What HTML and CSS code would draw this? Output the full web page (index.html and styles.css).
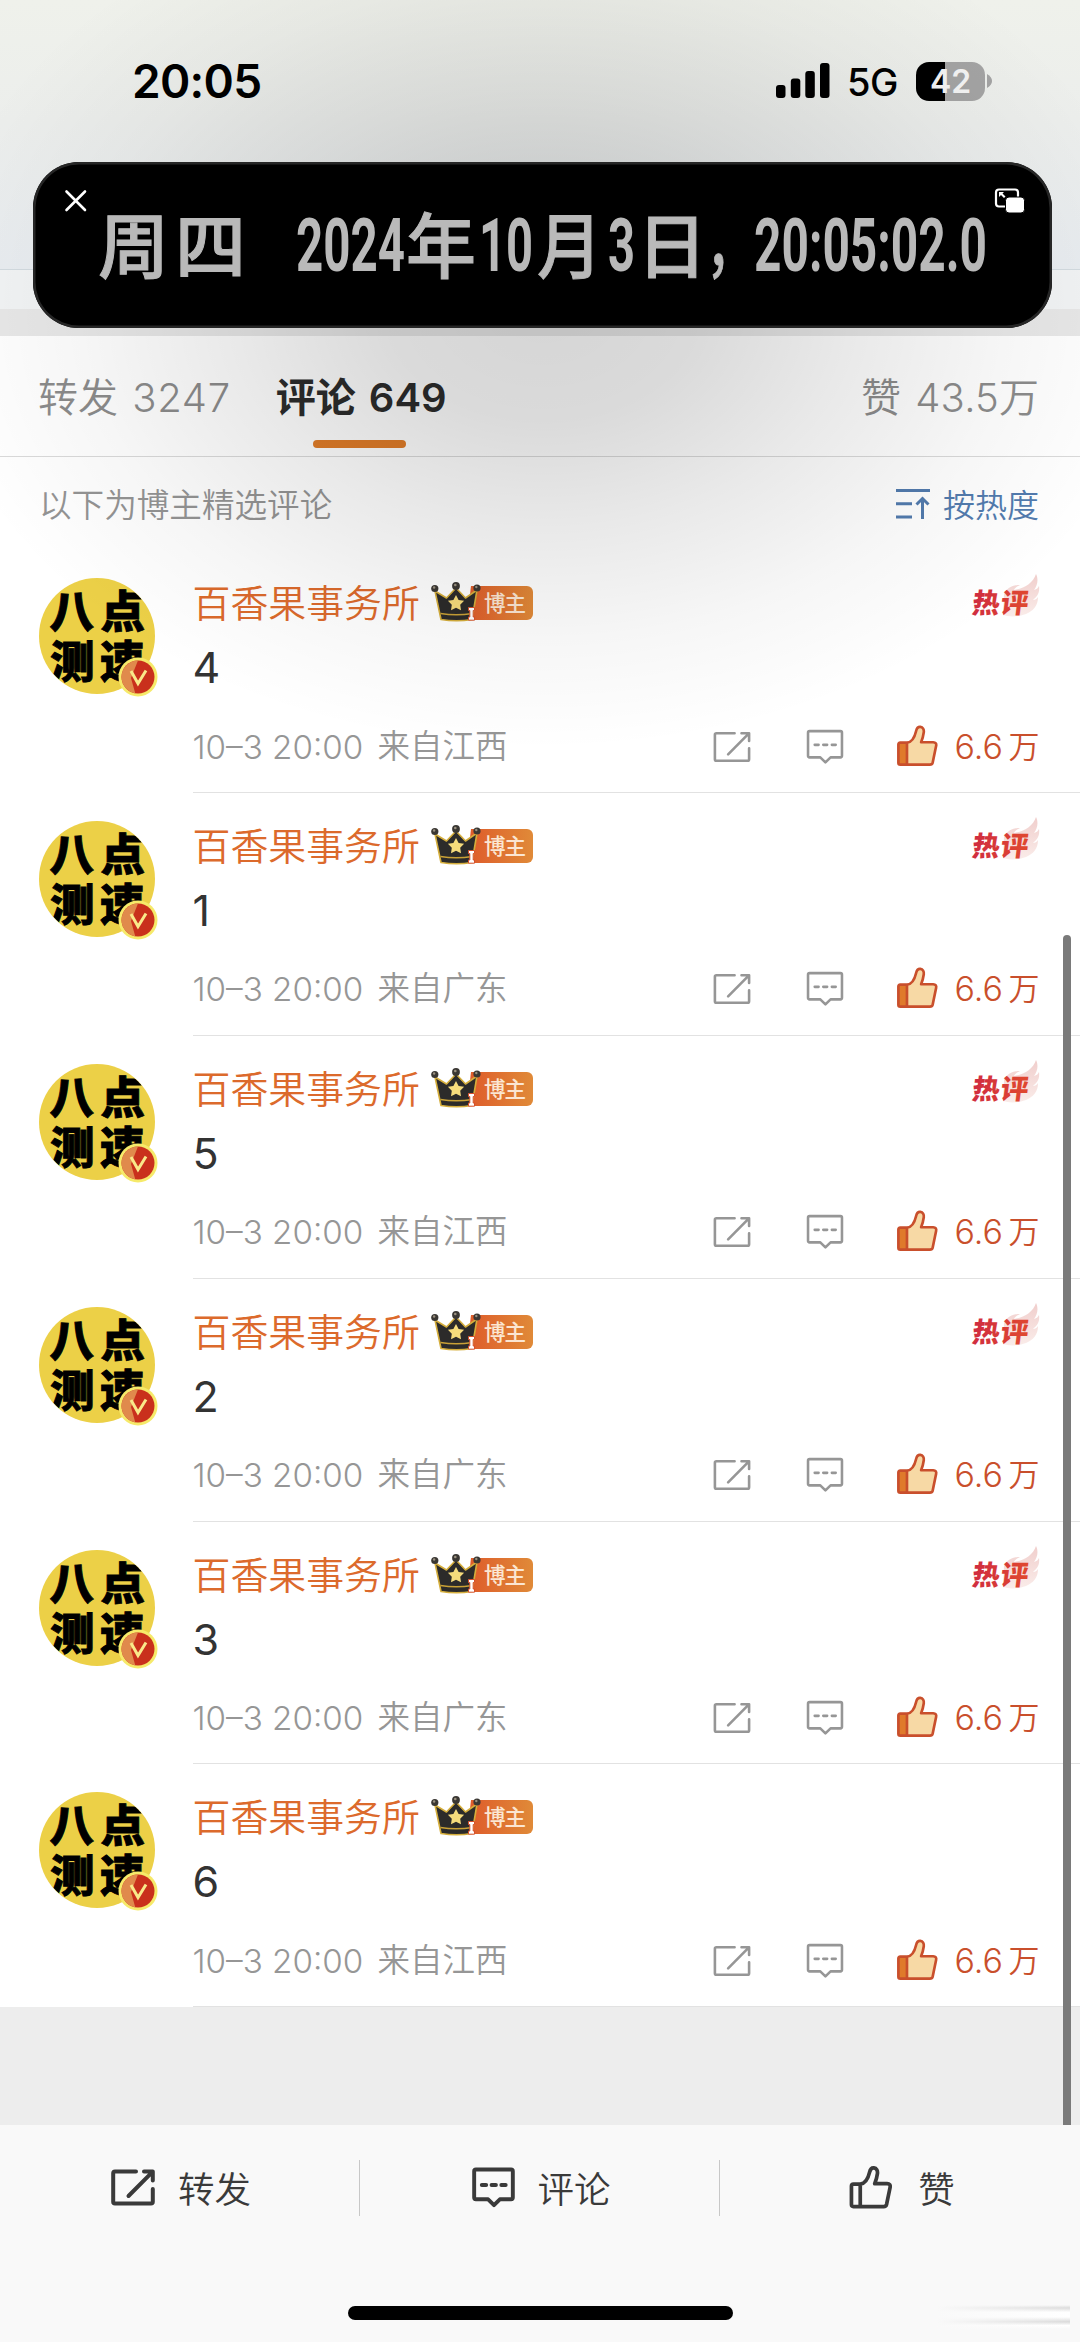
FILE: index.html
```html
<!DOCTYPE html>
<html lang="zh-CN">
<head>
<meta charset="utf-8">
<title>评论</title>
<link rel="stylesheet" href="styles.css">
</head>
<body>
<svg class="defs" width="0" height="0" aria-hidden="true">
  <defs>
    <linearGradient id="tagFill" x1="0" x2="1"><stop offset="0" stop-color="#de5a2a"/><stop offset="1" stop-color="#e08a38"/></linearGradient>
    <linearGradient id="hotFill" x1="0" x2="1"><stop offset="0" stop-color="#d02c40"/><stop offset="1" stop-color="#e0492f"/></linearGradient>
    <linearGradient id="flameFill" x1="0" x2="0" y1="0" y2="1"><stop offset="0" stop-color="#eab9b6"/><stop offset="1" stop-color="#f8e4e0"/></linearGradient>
    <clipPath id="round"><circle cx="58" cy="58" r="57.7"/></clipPath>
    <clipPath id="vclip"><circle cx="99" cy="99" r="16.500"/></clipPath>
  </defs>
  <symbol id="share" viewBox="0 0 44 37">
    <path d="M25 2.500H4a1.800 1.800 0 0 0-1.800 1.800v28.400a1.800 1.800 0 0 0 1.800 1.800h36a1.800 1.800 0 0 0 1.800-1.800V20M33 2.500h8.800v9M41 3.300L17.500 27" fill="none" stroke="currentColor" stroke-linecap="round" stroke-linejoin="round"/>
  </symbol>
  <symbol id="comment" viewBox="0 0 44 42">
    <path d="M4 2.500h36a1.800 1.800 0 0 1 1.800 1.800v27a1.800 1.800 0 0 1-1.800 1.800H28.500L22.500 39l-6-5.900H4a1.800 1.800 0 0 1-1.800-1.800v-27A1.800 1.800 0 0 1 4 2.500zM10 18.500h4.500M20 18.500h4.500M30 18.500h4.500" fill="none" stroke="currentColor" stroke-linecap="round" stroke-linejoin="round"/>
  </symbol>
  <symbol id="thumb" viewBox="0 0 44 44">
    <path class="thumb-fill" d="M12 18.500c5-.5 7.500-5.500 9-12 .8-3.500 2.500-4.700 4.500-4.500 2.600.3 4 2.700 3.600 5.600-.6 4.300-1.500 7.500-2.800 10.500H39c2.500 0 3.600 1.500 3 4l-3.600 17c-.4 1.700-1.200 2.400-3 2.400H12z"/>
    <path class="thumb-cuff" d="M11 18.500H4.500c-1.400 0-2 .7-2 2v19c0 1.400.6 2 2 2H11z"/>
    <path d="M11.500 18.500H4.500c-1.400 0-2 .7-2 2v19c0 1.400.6 2 2 2h31c1.800 0 2.600-.7 3-2.400l3.500-17c.6-2.500-.5-4-3-4H26.300c1.300-3 2.200-6.200 2.800-10.500.4-2.900-1-5.300-3.600-5.600-2-.2-3.700 1-4.500 4.500-1.500 6.500-4.500 11.500-9.500 12zM11.500 18.500v23" fill="none" stroke="currentColor" stroke-linejoin="round"/>
  </symbol>
  <symbol id="avatar" viewBox="0 0 120 120">
    <circle cx="58" cy="58" r="58" fill="#ecd047"/>
    <g clip-path="url(#round)">
      <g class="avatar-text">
        <text x="10.500" y="49.500">八</text><text x="61.500" y="49.500">点</text>
        <text x="11" y="100">测</text><text x="61" y="100">速</text>
      </g>
    </g>
    <circle cx="99" cy="99" r="19.500" fill="#f6ea6a"/>
    <g clip-path="url(#vclip)">
      <path d="M80 80h40v40H80z" fill="#c9301c"/>
      <path d="M80 80h20l-8 20 5 18H80z" fill="#e08a4c"/>
    </g>
    <path d="M92 93l7 12.500 8-13" fill="none" stroke="#f9e98a" stroke-width="3"/>
  </symbol>
  <symbol id="owner" viewBox="0 0 104 40">
    <path d="M40 4h56a6 6 0 0 1 6 6v22a6 6 0 0 1-6 6H36z" fill="url(#tagFill)"/>
    <text class="owner-text" x="53" y="29" textLength="42">博主</text>
    <path d="M4 9l11.500 7L25 6l9.500 10L46 8l-5 29.500q-15.500 2.500-31 0z" fill="#2c2b2a" stroke="#d5ae3c" stroke-width="1.600" stroke-linejoin="round"/>
    <path d="M9.500 31.500q15.500 2.500 32 0" fill="none" stroke="#c9a136" stroke-width="1.300"/>
    <circle cx="3.800" cy="6.500" r="3.600" fill="#3a3733"/><circle cx="25" cy="4" r="3.900" fill="#3a3733"/><circle cx="46" cy="6" r="3.600" fill="#3a3733"/>
    <circle cx="3.100" cy="5.500" r="1.200" fill="#9a9180"/><circle cx="24.300" cy="3" r="1.300" fill="#9a9180"/><circle cx="45.300" cy="5" r="1.200" fill="#9a9180"/>
    <path d="M25 13l2.600 4.900 5.500.9-3.900 4 .8 5.500-5-2.500-5 2.500.8-5.500-3.900-4 5.500-.9z" fill="#f6dc7c"/>
    <path d="M37.500 25.500h6v3h-1.300v6.500h1.300v3.200h-6V35h1.300v-6.500h-1.300z" fill="#fff" stroke="#d4512c" stroke-width="1"/>
  </symbol>
  <symbol id="hot" viewBox="0 0 72 52">
    <path d="M36 23c3-6 9-9 16-9-4 2-5 3-6 5 11-2 19-7 22-16 3 6 1 12-2 16 3-1 4-2 5-4 1 7-2 11-6 14 2 0 4-1 5-3 0 9-5 14-12 17-8 3-17 3-23 1z" fill="url(#flameFill)" opacity=".7"/>
    <text class="hot-text" x="8.500" y="42.500" transform="skewX(-7)" textLength="56">热评</text>
  </symbol>
</svg>

<div class="phone">
  <header class="status">
    <span class="clock">20:05</span>
    <div class="status-right">
      <svg class="signal" viewBox="0 0 54 36"><rect x="0" y="22" width="9.500" height="13" rx="3"/><rect x="14.800" y="15.500" width="9.500" height="19.500" rx="3"/><rect x="29.300" y="8" width="9.500" height="27" rx="3"/><rect x="44" y="0" width="9.500" height="35" rx="3"/></svg>
      <span class="network">5G</span>
      <span class="battery">42</span>
      <svg class="nub" viewBox="0 0 5 14"><path d="M0 0q5 3 5 7t-5 7z"/></svg>
    </div>
  </header>
  <div class="nav-edge"></div>
  <div class="divider-band"></div>

  <nav class="tabs">
    <span class="tab">转发 <i>3247</i></span>
    <span class="tab active">评论 <i>649</i></span>
    <span class="tab likes">赞 <i>43.5</i>万</span>
  </nav>
  <div class="sort">
    <span>以下为博主精选评论</span>
    <span class="sort-by">
      <svg viewBox="0 0 34 32"><path d="M0 2.500h34M0 15.800h16M0 29h16M26.500 31V11.500M20.500 16.500l6-6 6 6" fill="none" stroke="currentColor" stroke-width="3"/></svg>
      按热度
    </span>
  </div>

  <main class="list">
    <article class="row">
      <svg class="avatar"><use href="#avatar"/></svg>
      <div class="body">
        <div class="head"><span class="name">百香果事务所</span><svg class="owner"><use href="#owner"/></svg><svg class="hot"><use href="#hot"/></svg></div>
        <p class="text">4</p>
        <div class="meta"><span class="time">10–3 20:00</span><span class="from">来自江西</span><svg class="i-share"><use href="#share"/></svg><svg class="i-comment"><use href="#comment"/></svg><svg class="i-thumb"><use href="#thumb"/></svg><span class="count">6.6<b>万</b></span></div>
      </div>
    </article>
    <article class="row">
      <svg class="avatar"><use href="#avatar"/></svg>
      <div class="body">
        <div class="head"><span class="name">百香果事务所</span><svg class="owner"><use href="#owner"/></svg><svg class="hot"><use href="#hot"/></svg></div>
        <p class="text">1</p>
        <div class="meta"><span class="time">10–3 20:00</span><span class="from">来自广东</span><svg class="i-share"><use href="#share"/></svg><svg class="i-comment"><use href="#comment"/></svg><svg class="i-thumb"><use href="#thumb"/></svg><span class="count">6.6<b>万</b></span></div>
      </div>
    </article>
    <article class="row">
      <svg class="avatar"><use href="#avatar"/></svg>
      <div class="body">
        <div class="head"><span class="name">百香果事务所</span><svg class="owner"><use href="#owner"/></svg><svg class="hot"><use href="#hot"/></svg></div>
        <p class="text">5</p>
        <div class="meta"><span class="time">10–3 20:00</span><span class="from">来自江西</span><svg class="i-share"><use href="#share"/></svg><svg class="i-comment"><use href="#comment"/></svg><svg class="i-thumb"><use href="#thumb"/></svg><span class="count">6.6<b>万</b></span></div>
      </div>
    </article>
    <article class="row">
      <svg class="avatar"><use href="#avatar"/></svg>
      <div class="body">
        <div class="head"><span class="name">百香果事务所</span><svg class="owner"><use href="#owner"/></svg><svg class="hot"><use href="#hot"/></svg></div>
        <p class="text">2</p>
        <div class="meta"><span class="time">10–3 20:00</span><span class="from">来自广东</span><svg class="i-share"><use href="#share"/></svg><svg class="i-comment"><use href="#comment"/></svg><svg class="i-thumb"><use href="#thumb"/></svg><span class="count">6.6<b>万</b></span></div>
      </div>
    </article>
    <article class="row">
      <svg class="avatar"><use href="#avatar"/></svg>
      <div class="body">
        <div class="head"><span class="name">百香果事务所</span><svg class="owner"><use href="#owner"/></svg><svg class="hot"><use href="#hot"/></svg></div>
        <p class="text">3</p>
        <div class="meta"><span class="time">10–3 20:00</span><span class="from">来自广东</span><svg class="i-share"><use href="#share"/></svg><svg class="i-comment"><use href="#comment"/></svg><svg class="i-thumb"><use href="#thumb"/></svg><span class="count">6.6<b>万</b></span></div>
      </div>
    </article>
    <article class="row">
      <svg class="avatar"><use href="#avatar"/></svg>
      <div class="body">
        <div class="head"><span class="name">百香果事务所</span><svg class="owner"><use href="#owner"/></svg></div>
        <p class="text">6</p>
        <div class="meta"><span class="time">10–3 20:00</span><span class="from">来自江西</span><svg class="i-share"><use href="#share"/></svg><svg class="i-comment"><use href="#comment"/></svg><svg class="i-thumb"><use href="#thumb"/></svg><span class="count">6.6<b>万</b></span></div>
      </div>
    </article>
  </main>
  <div class="list-end"></div>

  <footer class="toolbar">
    <div class="actions">
      <div class="action"><svg class="b-share"><use href="#share"/></svg><span>转发</span></div>
      <div class="action"><svg class="b-comment"><use href="#comment"/></svg><span>评论</span></div>
      <div class="action like"><svg class="b-thumb"><use href="#thumb"/></svg><span>赞</span></div>
    </div>
    <div class="home"></div>
    <div class="smudge"></div>
  </footer>

  <div class="scrollbar"></div>

  <div class="pip-shade"></div>
  <section class="pip">
    <svg viewBox="0 0 1019 166" width="1019" height="166">
      <path d="M33.500 29.500l18.500 18.500M52 29.500L33.500 48" stroke="#fff" stroke-width="2.600" stroke-linecap="round"/>
      <g class="pip-text">
        <text class="cjk" x="65" y="110" textLength="148">周四</text>
        <text class="num" x="263" y="109" textLength="109" lengthAdjust="spacingAndGlyphs">2024</text>
        <text class="cjk" x="373" y="110" textLength="70" lengthAdjust="spacingAndGlyphs">年</text>
        <text class="num" x="446" y="109" textLength="54" lengthAdjust="spacingAndGlyphs">10</text>
        <text class="cjk" x="504" y="110" textLength="65" lengthAdjust="spacingAndGlyphs">月</text>
        <text class="num" x="575" y="109" textLength="27" lengthAdjust="spacingAndGlyphs">3</text>
        <text class="cjk" x="604" y="110" textLength="70" lengthAdjust="spacingAndGlyphs">日</text>
        <text class="cjk" x="673" y="108" textLength="48" lengthAdjust="spacingAndGlyphs">，</text>
        <text class="num" x="721" y="109" textLength="233" lengthAdjust="spacingAndGlyphs">20:05:02.0</text>
      </g>
      <rect x="963" y="27.500" width="22" height="17" rx="3" fill="none" stroke="#fff" stroke-width="2.200"/>
      <path d="M966 30h5l-1.500 1.500 3 3-1.500 1.500-3-3L966 35z" fill="#fff"/>
      <rect x="972.500" y="35" width="19" height="16" rx="3.500" fill="#fff" stroke="#000" stroke-width="1"/>
    </svg>
  </section>
</div>
</body>
</html>
```
FILE: styles.css
```css
* { box-sizing: border-box; }
body { margin: 0; background: #fff; }
p { margin: 0; }
i { font-style: normal; }
svg { display: block; flex: none; overflow: visible; }
.defs { position: absolute; }

.phone {
  position: relative;
  width: 1080px;
  height: 2342px;
  overflow: hidden;
  display: flex;
  flex-direction: column;
  background: #fff;
  font-family: Inter, "Noto Sans CJK SC", sans-serif;
  font-weight: 350;
  color: #333;
  white-space: nowrap;
}

/* status bar */
.status {
  height: 270px;
  padding: 56px 88px 0 132px;
  display: flex;
  justify-content: space-between;
  align-items: flex-start;
  border-bottom: 1px solid #d3dbe0;
  background: linear-gradient(#eff1eb, #eceeec 45%, #e9edf1);
  color: #000;
}
.clock { font-size: 46px; line-height: 50px; font-weight: 600; letter-spacing: -.7px; }
.status-right { display: flex; align-items: center; height: 50px; }
.signal { width: 54px; height: 36px; }
.network { margin-left: 17px; font-size: 38px; font-weight: 500; line-height: 50px; padding-top: 2px; letter-spacing: -.5px; }
.battery {
  width: 69px;
  height: 39px;
  margin-left: 18px;
  border-radius: 13px;
  background: linear-gradient(90deg, #000 42%, #a4a4a4 42%);
  color: #f4f4f4;
  text-align: center;
  font-size: 32px;
  font-weight: 600;
  line-height: 39px;
}
.nub { width: 5px; height: 14px; margin-left: 2px; fill: #a4a4a4; }
.nav-edge { height: 39px; background: #f2f4f5; }
.divider-band { height: 27px; background: #e8e8e8; }

/* tabs */
.tabs {
  height: 121px;
  padding: 4px 41px 0 38px;
  display: flex;
  align-items: center;
  border-bottom: 1px solid #dadada;
  font-size: 40px;
  color: #8c8c8c;
}
.tab { position: relative; line-height: 60px; }
.tab i { margin-left: 3px; letter-spacing: .7px; }
.tab.active { margin-left: 45px; color: #2c2c2c; font-weight: 600; }
.tab.active i { letter-spacing: 0; }
.tab.active::after {
  content: "";
  position: absolute;
  left: 37px;
  top: 72px;
  width: 93px;
  height: 8px;
  border-radius: 4px;
  background: #e07c28;
}
.tab.likes { margin-left: auto; }
.tab.likes i { letter-spacing: .2px; }
.sort {
  height: 93px;
  padding: 0 41px 2px 39px;
  display: flex;
  justify-content: space-between;
  align-items: center;
  font-size: 32.600px;
  color: #949494;
}
.sort-by { display: flex; align-items: center; gap: 13px; font-size: 32px; color: #527bae; }
.sort-by svg { width: 34px; height: 32px; margin-top: 2px; }

/* comments */
.row { height: 242.900px; padding: 28px 0 0 38.500px; display: flex; }
.avatar { width: 120px; height: 120px; }
.avatar-text { font: 900 44.500px "Noto Sans CJK SC", sans-serif; fill: #000; stroke: #000; stroke-width: .8px; }
.body {
  flex: 1;
  margin: -28px 0 0 34px;
  padding: 32px 40.500px 0 0;
  border-bottom: 1px solid #e2e2e2;
}
.head { display: flex; align-items: center; height: 42px; }
.name { font-size: 37.900px; line-height: 42px; color: #dc6a2c; }
.owner { width: 104px; height: 40px; margin: -2px 0 0 11px; }
.owner-text { font: 500 21.500px "Noto Sans CJK SC", sans-serif; fill: #fbe6d2; }
.hot { width: 72px; height: 52px; margin: -12px 0 0 auto; }
.hot-text { font: 900 27.500px "Noto Sans CJK SC", sans-serif; fill: url(#hotFill); }
.text { height: 54px; margin-top: 16px; font-size: 43px; line-height: 54px; font-weight: 400; }
.meta { display: flex; align-items: center; height: 40px; margin-top: 32.500px; line-height: 40px; color: #969696; }
.time { font-size: 33.200px; width: 185px; font-weight: 300; }
.from { font-size: 32.500px; }
.i-share { width: 38px; height: 32px; margin-left: auto; stroke-width: 3px; }
.i-comment { width: 38px; height: 36px; margin-left: 55px; stroke-width: 3px; }
.i-thumb { width: 42px; height: 42px; margin: -2px 0 0 52px; stroke-width: 2.800px; color: #c94f2c; --fill: #f7d9a5; --cuff: #df7a2b; }
.thumb-fill { fill: var(--fill, none); }
.thumb-cuff { fill: var(--cuff, none); }
.thumb-fill, .thumb-cuff { stroke: none; }
.count { width: 85px; margin-left: 17px; display: flex; justify-content: space-between; font-size: 34px; color: #c94f2c; }
.count b { font-size: 31px; font-weight: 350; }

.list-end { flex: 1; background: #ededed; }

/* bottom toolbar */
.toolbar { position: relative; height: 217px; background: #f9f9f9; }
.actions { display: flex; padding-top: 35px; }
.action {
  flex: 1;
  height: 56px;
  padding: 0 0 2px 3px;
  display: flex;
  align-items: center;
  justify-content: center;
  gap: 23px;
  font-size: 36.500px;
  color: #3a3a3a;
}
.action + .action { border-left: 1px solid #c8c8c8; }
.like { gap: 26px; padding-left: 4px; }
.b-share { width: 44px; height: 37px; stroke-width: 4px; }
.b-comment { width: 43px; height: 41px; stroke-width: 4px; }
.b-thumb { width: 43px; height: 43px; stroke-width: 3.800px; }
.home { width: 385px; height: 14px; margin: 90px auto 0 348px; border-radius: 7px; background: #000; }
.smudge {
  position: absolute;
  left: 880px;
  top: 180px;
  width: 190px;
  height: 24px;
  background: linear-gradient(90deg, #f9f9f9 30%, rgba(249, 249, 249, 0)), linear-gradient(#f9f9f9, #dcdcdc 12%, #fff 30%, #fff 50%, #dadada 70%, #fff 85%, #f9f9f9);
}

.scrollbar { position: absolute; left: 1063px; top: 935px; width: 8px; height: 1190px; border-radius: 4px 4px 0 0; background: #7a7a7a; }

/* floating picture-in-picture clock */
.pip-shade {
  position: absolute;
  left: 0;
  top: 0;
  width: 1080px;
  height: 800px;
  background: radial-gradient(620px 440px at 543px 310px, rgba(0, 0, 0, .165), rgba(0, 0, 0, .145) 25%, rgba(0, 0, 0, .085) 50%, rgba(0, 0, 0, .035) 75%, rgba(0, 0, 0, 0));
}
.pip {
  position: absolute;
  left: 33px;
  top: 162px;
  width: 1019px;
  height: 166px;
  border-radius: 46px;
  background: #000;
  box-shadow: inset 0 0 0 2.500px #262626;
}
.pip-text { fill: #b9b9b9; }
.cjk { font: 500 71px "Noto Sans CJK SC", sans-serif; stroke: #b9b9b9; stroke-width: 1px; }
.num { font: 700 74px Roboto, sans-serif; }
```
